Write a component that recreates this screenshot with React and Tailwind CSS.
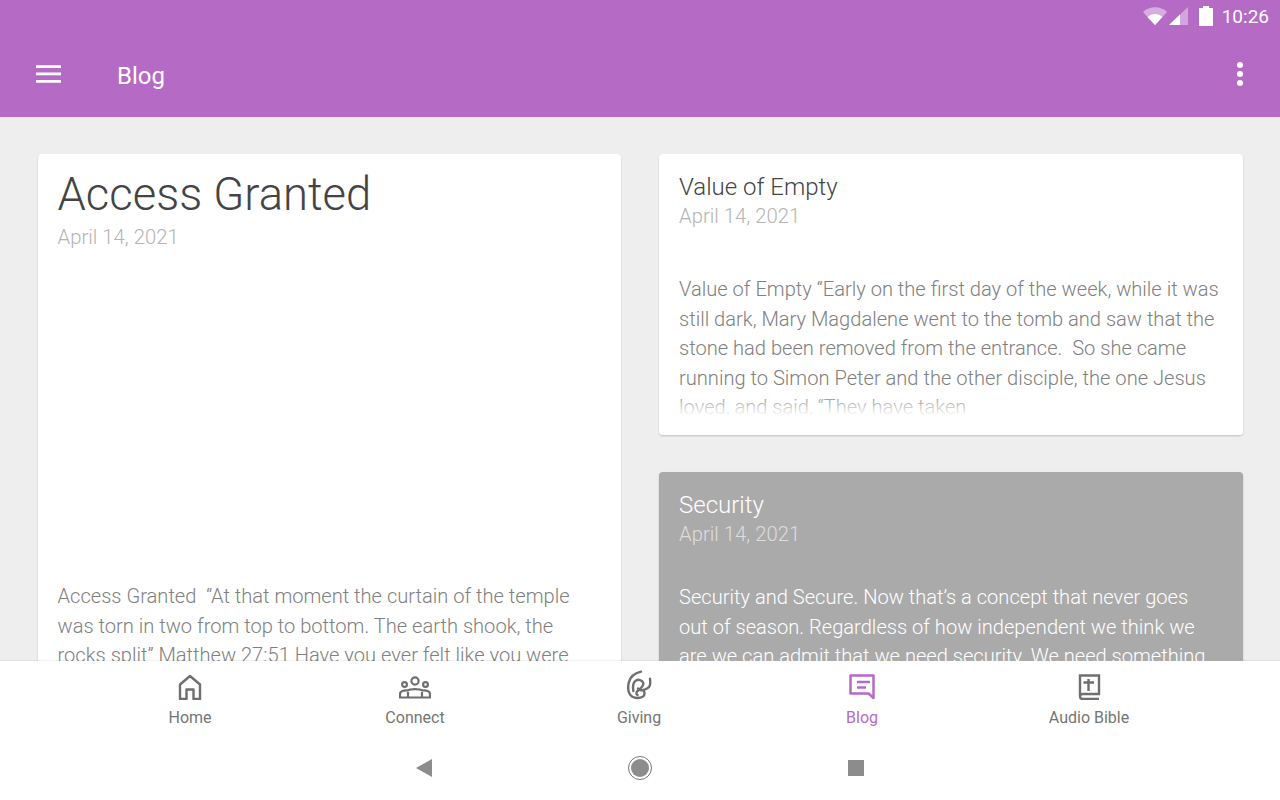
import React from "react";

const font = { fontFamily: "Roboto, sans-serif" };

function StatusBar() {
  return (
    <div className="flex items-center justify-end h-[32px] pr-[11px] text-white">
      <svg width="24" height="18" viewBox="0 0 24 18" className="mr-[2px]">
        <path d="M0 5 C6.5 -1.2 17.5 -1.2 24 5 L12 18 Z" fill="#ffffff" fillOpacity="0.45" />
        <path d="M4.5 10 C9 6 15 6 19.5 10 L12 18 Z" fill="#ffffff" />
      </svg>
      <svg width="19" height="18" viewBox="0 0 19 18">
        <path d="M0 18 L19 0 V18 Z" fill="#ffffff" fillOpacity="0.4" />
        <path d="M0 18 L11 7.6 V18 Z" fill="#ffffff" />
      </svg>
      <svg width="14" height="20" viewBox="0 0 14 20" className="ml-[11px]">
        <path d="M4 0 H10 V2 H14 V20 H0 V2 H4 Z" fill="#ffffff" />
      </svg>
      <span className="text-[19px] leading-none ml-[9px]">10:26</span>
    </div>
  );
}

function BlogCard({ title, date, body, dark }) {
  return (
    <div
      className={`relative h-[281px] rounded-[4px] overflow-hidden shadow-[0_1px_2px_rgba(0,0,0,0.2)] px-[20px] pt-[18px] ${
        dark ? "bg-[#aaaaaa]" : "bg-white"
      }`}
    >
      <h2 className={`text-[24px] leading-[30px] font-light ${dark ? "text-white" : "text-[#444444]"}`}>{title}</h2>
      <p className={`text-[20.3px] leading-[28px] font-light ${dark ? "text-[#dddddd]" : "text-[#b4b4b4]"}`}>{date}</p>
      <p
        className={`text-[20.1px] leading-[29.6px] font-light whitespace-pre ${
          dark ? "mt-[35px] text-white" : "mt-[45px] text-[#808080]"
        }`}
      >
        {body}
      </p>
      {!dark && (
        <div className="absolute left-0 right-0 bottom-0 h-[42px] bg-gradient-to-b from-white/0 via-white via-55% to-white" />
      )}
    </div>
  );
}

function NavItem({ label, active, width, children }) {
  return (
    <div className={`flex flex-col items-center ${width}`}>
      <div className="h-[32px] flex items-end justify-center">{children}</div>
      <span className={`mt-[8px] text-[16px] leading-[20px] ${active ? "text-[#b56ac6]" : "text-[#757575]"}`}>
        {label}
      </span>
    </div>
  );
}

export default function App() {
  return (
    <div className="h-screen w-full flex flex-col overflow-hidden bg-[#eeeeee]" style={font}>
      <header className="h-[117px] shrink-0 bg-[#b56ac6]">
        <StatusBar />
        <div className="flex items-center h-[85px] pl-[36px] pr-[37px] -mt-[1px]">
          <svg width="25" height="18" viewBox="0 0 25 18">
            <path d="M0 0.2 H25 V3 H0 Z M0 7.5 H25 V10.3 H0 Z M0 14.9 H25 V17.7 H0 Z" fill="#ffffff" />
          </svg>
          <h1 className="ml-[56px] mt-[4px] text-[24px] text-white">Blog</h1>
          <div className="ml-auto flex flex-col gap-[3px]">
            <span className="w-[6px] h-[6px] rounded-full bg-white" />
            <span className="w-[6px] h-[6px] rounded-full bg-white" />
            <span className="w-[6px] h-[6px] rounded-full bg-white" />
          </div>
        </div>
      </header>

      <main className="flex-1 min-h-0 overflow-hidden grid grid-cols-2 gap-x-[38px] px-[37.5px] pt-[37px] items-start">
        <div className="h-[600px] bg-white rounded-[4px] shadow-[0_1px_2px_rgba(0,0,0,0.2)] px-[20px] pt-[13px]">
          <h2 className="text-[45.4px] leading-[56px] font-light text-[#444444]">Access Granted</h2>
          <p className="text-[20.3px] leading-[28px] font-light text-[#b4b4b4]">April 14, 2021</p>
          <p className="mt-[331px] text-[20.1px] leading-[29.6px] font-light text-[#808080] whitespace-pre">
            {"Access Granted  \u201cAt that moment the curtain of the temple\nwas torn in two from top to bottom. The earth shook, the\nrocks split\u201d Matthew 27:51 Have you ever felt like you were"}
          </p>
        </div>
        <div className="flex flex-col gap-[37px]">
          <BlogCard
            title="Value of Empty"
            date="April 14, 2021"
            body={"Value of Empty \u201cEarly on the first day of the week, while it was\nstill dark, Mary Magdalene went to the tomb and saw that the\nstone had been removed from the entrance.  So she came\nrunning to Simon Peter and the other disciple, the one Jesus\nloved, and said, \u201cThey have taken"}
          />
          <BlogCard
            dark
            title="Security"
            date="April 14, 2021"
            body={"Security and Secure. Now that\u2019s a concept that never goes\nout of season. Regardless of how independent we think we\nare we can admit that we need security. We need something"}
          />
        </div>
      </main>

      <footer className="h-[139px] shrink-0 bg-white shadow-[0_-1px_1px_rgba(0,0,0,0.05)]">
        <nav className="h-[76px] flex pl-[77px] pt-[7px]">
          <NavItem label="Home" width="w-[226px]">
            <svg width="26" height="26" viewBox="0 0 26 26" fill="none" stroke="#6f6f6f" strokeWidth="2.4">
              <path d="M3 25 V10.5 L13 2 L23 10.5 V25 H16.5 V15.5 H9.5 V25 Z" strokeLinejoin="round" />
            </svg>
          </NavItem>
          <NavItem label="Connect" width="w-[224px]">
            <svg width="32" height="24" viewBox="0 0 32 24" fill="none" stroke="#6f6f6f" strokeWidth="2.2">
              <circle cx="16" cy="5" r="3.6" />
              <circle cx="5.5" cy="8.5" r="2.4" />
              <circle cx="26.5" cy="8.5" r="2.4" />
              <path d="M1 21.5 V18 C1 15 5 14 8.5 14.5 C11 12.6 21 12.6 23.5 14.5 C27 14 31 15 31 18 V21.5 Z" />
              <path d="M9 21 V16 M23 21 V16" />
            </svg>
          </NavItem>
          <NavItem label="Giving" width="w-[224px]">
            <svg width="28" height="30" viewBox="0 0 28 30" fill="none" stroke="#6f6f6f" strokeWidth="2.4" strokeLinecap="round">
              <path d="M16 1.7 C10 3 5 7 3.6 13 C2.5 19 3.5 24 7 26.5 C10 28.5 15 28.5 18 26.5 C20 25 20 22 18.3 20" />
              <path d="M8.3 21 C7.5 16 8.5 12 11 10.5 C13.5 9 17 10 18.3 13 C19 16 15 19 12.5 21 C11 22.5 11 24 12.5 25" />
              <path d="M25 8.7 C25.5 12 25.5 15 24 17 C22.5 19 20 19.5 18.3 20 C16 20.5 14 20 13 18.5" />
            </svg>
          </NavItem>
          <NavItem label="Blog" active width="w-[222px]">
            <svg width="26" height="26" viewBox="0 0 26 26" fill="none" stroke="#b56ac6" strokeWidth="2.5">
              <path d="M1.5 1.5 H24.5 V24 L19.5 19.5 H1.5 Z" strokeLinejoin="round" />
              <path d="M8 8 H21 M8 13.5 H17" />
            </svg>
          </NavItem>
          <NavItem label="Audio Bible" width="w-[232px]">
            <svg width="24" height="26" viewBox="0 0 24 26" fill="none" stroke="#6f6f6f" strokeWidth="2.4">
              <path d="M3 22 V1.5 H22 V20 H6 C2 20 2 25 6 25 H22" />
              <path d="M11.5 5 V17 M6.5 8.5 H17" />
            </svg>
          </NavItem>
        </nav>
        <div className="h-[63px] flex items-center justify-center gap-[192px] pb-[2px]">
          <div className="w-[24px] flex justify-center">
            <svg width="16" height="18" viewBox="0 0 16 18">
              <path d="M16 0 V18 L0 9 Z" fill="#8c8c8c" />
            </svg>
          </div>
          <div className="w-[24px] h-[24px] rounded-full border border-[#777777] p-[2px]">
            <div className="w-full h-full rounded-full bg-[#8c8c8c]" />
          </div>
          <div className="w-[24px] flex justify-center">
            <div className="w-[16px] h-[16px] bg-[#8c8c8c]" />
          </div>
        </div>
      </footer>
    </div>
  );
}
